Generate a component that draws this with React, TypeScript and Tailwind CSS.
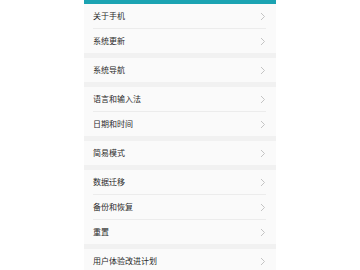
import React from 'react';

const groups: string[][] = [
  ['关于手机', '系统更新'],
  ['系统导航'],
  ['语言和输入法', '日期和时间'],
  ['简易模式'],
  ['数据迁移', '备份和恢复', '重置'],
  ['用户体验改进计划'],
];

const Chevron = () => (
  <svg width="6" height="9" viewBox="0 0 6 9" fill="none">
    <path d="M1 1l3.5 3.5L1 8" stroke="#c4c4c4" strokeWidth="1" />
  </svg>
);

export default function App() {
  return (
    <div className="w-[360px] h-[270px] bg-white overflow-hidden flex justify-center">
      <div
        className="w-[192px] bg-[#f1f1f1] flex flex-col"
        style={{ fontFamily: '"Noto Sans CJK SC", "Noto Sans", sans-serif' }}
      >
        <div className="h-[4px] shrink-0 bg-[#1ba3b2]" />
        {groups.map((items, gi) => (
          <div
            key={gi}
            className={`bg-[#fafafa] pl-[9px] pr-[10px] shrink-0 ${gi > 0 ? 'mt-[5px]' : ''}`}
          >
            {items.map((label, i) => {
              const last = i === items.length - 1;
              return (
                <div
                  key={label}
                  className={
                    last
                      ? 'h-[24px] flex items-center justify-between'
                      : 'h-[25px] flex items-center justify-between border-b border-[#ececec]'
                  }
                >
                  <span className="text-[8px] leading-[24px] text-[#2a2a2a]">{label}</span>
                  <Chevron />
                </div>
              );
            })}
          </div>
        ))}
      </div>
    </div>
  );
}
